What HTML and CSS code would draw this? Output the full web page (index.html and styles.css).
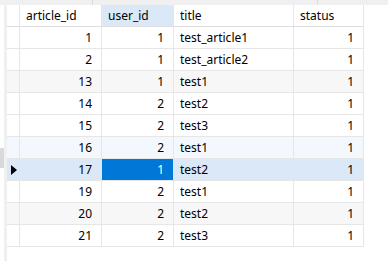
FILE: index.html
```html
<!DOCTYPE html>
<html lang="en">

<head>
    <meta charset="UTF-8">
    <title>articles</title>
    <link rel="stylesheet" href="styles.css">
</head>

<body>
    <div class="topband">
        <span class="seg seg-a"></span>
        <span class="seg seg-b"></span>
    </div>
    <div class="main">
        <div class="side">
            <div class="side-mark"></div>
        </div>
        <div class="strip"></div>
        <div class="grid">
            <div class="row head">
                <div class="cell gutter"></div>
                <div class="cell">article_id</div>
                <div class="cell col-active">user_id</div>
                <div class="cell">title</div>
                <div class="cell">status</div>
            </div>
            <div class="row">
                <div class="cell gutter"></div>
                <div class="cell num">1</div>
                <div class="cell num">1</div>
                <div class="cell">test_article1</div>
                <div class="cell num">1</div>
            </div>
            <div class="row">
                <div class="cell gutter"></div>
                <div class="cell num">2</div>
                <div class="cell num">1</div>
                <div class="cell">test_article2</div>
                <div class="cell num">1</div>
            </div>
            <div class="row alt">
                <div class="cell gutter"></div>
                <div class="cell num">13</div>
                <div class="cell num">1</div>
                <div class="cell">test1</div>
                <div class="cell num">1</div>
            </div>
            <div class="row">
                <div class="cell gutter"></div>
                <div class="cell num">14</div>
                <div class="cell num">2</div>
                <div class="cell">test2</div>
                <div class="cell num">1</div>
            </div>
            <div class="row">
                <div class="cell gutter"></div>
                <div class="cell num">15</div>
                <div class="cell num">2</div>
                <div class="cell">test3</div>
                <div class="cell num">1</div>
            </div>
            <div class="row hover">
                <div class="cell gutter"></div>
                <div class="cell num">16</div>
                <div class="cell num">2</div>
                <div class="cell">test1</div>
                <div class="cell num">1</div>
            </div>
            <div class="row current">
                <div class="cell gutter"><span class="arrow"></span></div>
                <div class="cell num">17</div>
                <div class="cell num focus">1</div>
                <div class="cell">test2</div>
                <div class="cell num">1</div>
            </div>
            <div class="row">
                <div class="cell gutter"></div>
                <div class="cell num">19</div>
                <div class="cell num">2</div>
                <div class="cell">test1</div>
                <div class="cell num">1</div>
            </div>
            <div class="row alt">
                <div class="cell gutter"></div>
                <div class="cell num">20</div>
                <div class="cell num">2</div>
                <div class="cell">test2</div>
                <div class="cell num">1</div>
            </div>
            <div class="row">
                <div class="cell gutter"></div>
                <div class="cell num">21</div>
                <div class="cell num">2</div>
                <div class="cell">test3</div>
                <div class="cell num">1</div>
            </div>
        </div>
    </div>
</body>

</html>
```

FILE: styles.css
```css
body {
    margin: 0;
    font-family: "Noto Sans", Arial, sans-serif;
    font-size: 12px;
    color: #000;
    background-color: #fff;
    height: 261px;
    overflow: hidden;
}

.topband {
    display: flex;
    height: 5px;
    background-color: #f0f0f0;
}

.seg {
    display: block;
    border-right: 1px solid #dcdcdc;
}

.seg-a {
    width: 92px;
}

.seg-b {
    width: 224px;
}

.main {
    display: flex;
    height: 256px;
}

.side {
    width: 4px;
}

.side-mark {
    margin-top: 143px;
    height: 20px;
    background-color: #d9d9d9;
}

.strip {
    width: 3px;
    background-color: #f0f0f0;
}

.grid {
    display: flex;
    flex-direction: column;
}

.row {
    display: grid;
    grid-template-columns: 13px 82px 72px 120px 70px;
    height: 22px;
}

.cell {
    box-sizing: border-box;
    border-right: 1px solid #e6e6e6;
    border-bottom: 1px solid #e6e6e6;
    padding: 0 6px;
    line-height: 21px;
    white-space: nowrap;
    overflow: hidden;
}

.head .cell {
    border-bottom-color: #dedede;
}

.col-active {
    background-color: #dae8f7;
}

.num {
    text-align: right;
    padding-right: 9px;
}

.gutter {
    padding: 0;
    position: relative;
}

.alt {
    background-color: #f7f7f7;
}

.hover {
    background-color: #f2f8fe;
}

.current {
    background-color: #dae8f7;
}

.focus {
    background-color: #0078d7;
    color: #fff;
}

.arrow {
    position: absolute;
    left: 4px;
    top: 6px;
    width: 0;
    height: 0;
    border-top: 5px solid transparent;
    border-bottom: 5px solid transparent;
    border-left: 6px solid #000;
}
```
